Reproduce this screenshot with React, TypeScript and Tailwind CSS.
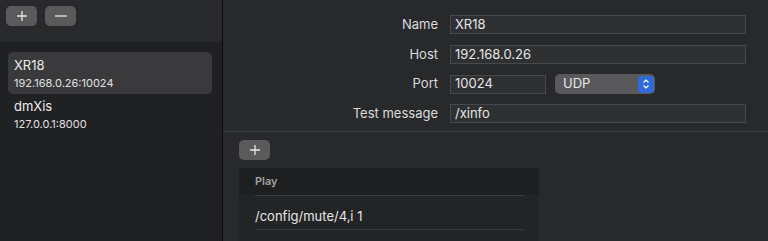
import React from "react";

const font = { fontFamily: "Inter, 'Noto Sans', sans-serif" };

function Plus() {
  return (
    <svg width="12" height="12" viewBox="0 0 12 12">
      <path d="M6 1v10M1 6h10" stroke="#e8e8e8" strokeWidth="1.3" />
    </svg>
  );
}
function Minus() {
  return (
    <svg width="14" height="12" viewBox="0 0 14 12">
      <path d="M1 6h12" stroke="#e8e8e8" strokeWidth="1.3" />
    </svg>
  );
}

function Field({ value, w }: { value: string; w?: string }) {
  return (
    <div
      className={`h-[19px] ${w ?? "flex-1"} bg-[#2f3032] border border-[#47484a] flex items-center pl-[4px] text-[13px] text-[#e6e6e6]`}
    >
      {value}
    </div>
  );
}

export default function App() {
  return (
    <div className="w-[768px] h-[241px] flex overflow-hidden bg-[#28292b]" style={font}>
      <div className="w-[222px] h-full flex flex-col bg-[#202123]">
        <div className="h-[42px] bg-[#28292b] flex items-start gap-[8px] pl-[6px] pt-[6px]">
          <div className="w-[31px] h-[20px] rounded-[5px] bg-[#5a5a5c] flex items-center justify-center">
            <Plus />
          </div>
          <div className="w-[31px] h-[20px] rounded-[5px] bg-[#5a5a5c] flex items-center justify-center">
            <Minus />
          </div>
        </div>
        <div className="pt-[10px] pl-[8px] pr-[10px] flex flex-col">
          <div className="h-[42px] rounded-[5px] bg-[#3a3a3c] pl-[6px] pt-[3px] flex flex-col">
            <div className="text-[13px] leading-[20px] text-[#ececec]">XR18</div>
            <div className="text-[11px] leading-[16px] text-[#e0e0e0]">192.168.0.26:10024</div>
          </div>
          <div className="h-[40px] pl-[6px] pt-[2px] flex flex-col">
            <div className="text-[13px] leading-[20px] text-[#ececec]">dmXis</div>
            <div className="text-[11px] leading-[16px] text-[#e0e0e0]">127.0.0.1:8000</div>
          </div>
        </div>
      </div>
      <div className="w-px h-full bg-[#0c0c0c]" />
      <div className="flex-1 h-full flex flex-col">
        <div className="pt-[15px] pr-[22px] flex flex-col gap-[10px] h-[131px]">
          <div className="flex items-center">
            <div className="w-[215px] text-right text-[13px] text-[#dcdcdc]">Name</div>
            <div className="w-[12px]" />
            <Field value="XR18" />
          </div>
          <div className="flex items-center">
            <div className="w-[215px] text-right text-[13px] text-[#dcdcdc]">Host</div>
            <div className="w-[12px]" />
            <Field value="192.168.0.26" />
          </div>
          <div className="flex items-center">
            <div className="w-[215px] text-right text-[13px] text-[#dcdcdc]">Port</div>
            <div className="w-[12px]" />
            <Field value="10024" w="w-[96px]" />
            <div className="ml-[9px] w-[100px] h-[20px] rounded-[5px] bg-[#59595b] flex items-center justify-between pl-[8px] pr-[1px] text-[13px] text-[#e8e8e8]">
              <span>UDP</span>
              <div className="w-[16px] h-[17px] rounded-[4px] bg-[#2f6cd8] flex items-center justify-center">
                <svg width="8" height="12" viewBox="0 0 8 12">
                  <path d="M1.5 4.5L4 2l2.5 2.5M1.5 7.5L4 10l2.5-2.5" stroke="#fff" strokeWidth="1.2" fill="none" />
                </svg>
              </div>
            </div>
          </div>
          <div className="flex items-center">
            <div className="w-[215px] text-right text-[13px] text-[#dcdcdc]">Test message</div>
            <div className="w-[12px]" />
            <Field value="/xinfo" />
          </div>
        </div>
        <div className="h-px bg-[#3e3f41]" />
        <div className="flex-1 pl-[16px] pt-[8px] flex flex-col">
          <div className="w-[31px] h-[20px] rounded-[5px] bg-[#5a5a5c] flex items-center justify-center">
            <Plus />
          </div>
          <div className="flex-1 mt-[8px] w-[300px] bg-[#232426] flex flex-col">
            <div className="h-[27px] bg-[#1e1f21] px-[16px] flex items-center">
              <span className="text-[11px] font-semibold text-[#a0a0a2]">Play</span>
            </div>
            <div className="h-px mx-[16px] bg-[#3e3f41]" />
            <div className="mx-[16px] h-[34px] flex items-center border-b border-[#3a3b3d] text-[13px] text-[#e6e6e6] pt-[9px]">
              /config/mute/4,i 1
            </div>
          </div>
        </div>
      </div>
    </div>
  );
}
